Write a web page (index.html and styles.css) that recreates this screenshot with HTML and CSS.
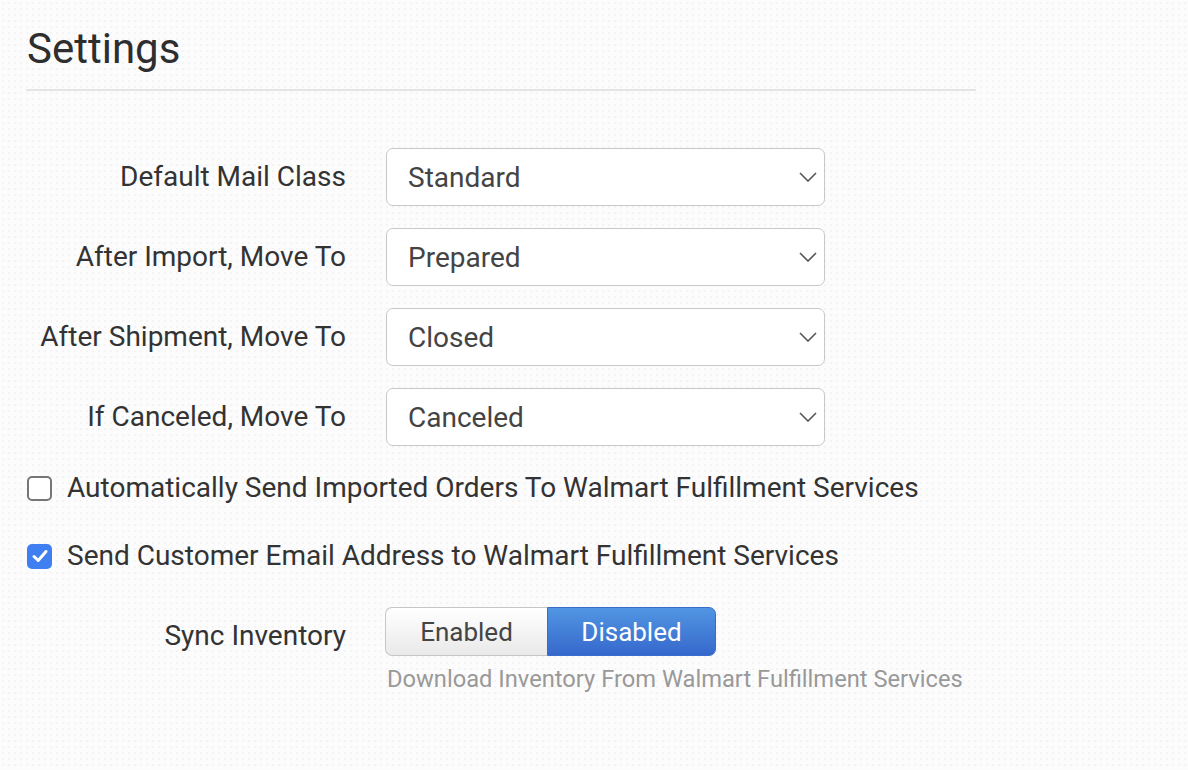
FILE: index.html
```html
<!DOCTYPE html>
<html lang="en">
<head>
<meta charset="utf-8">
<title>Settings</title>
<link rel="stylesheet" href="styles.css">
</head>
<body>
<main class="page">
  <h1 class="title">Settings</h1>
  <div class="divider"></div>
  <form class="form">
    <div class="field">
      <label class="label">Default Mail Class</label>
      <div class="select"><span>Standard</span><svg class="chev" width="18" height="10" viewBox="0 0 18 10"><polyline points="1,1 9,9 17,1" fill="none" stroke="#555" stroke-width="1.6"/></svg></div>
    </div>
    <div class="field">
      <label class="label">After Import, Move To</label>
      <div class="select"><span>Prepared</span><svg class="chev" width="18" height="10" viewBox="0 0 18 10"><polyline points="1,1 9,9 17,1" fill="none" stroke="#555" stroke-width="1.6"/></svg></div>
    </div>
    <div class="field">
      <label class="label">After Shipment, Move To</label>
      <div class="select"><span>Closed</span><svg class="chev" width="18" height="10" viewBox="0 0 18 10"><polyline points="1,1 9,9 17,1" fill="none" stroke="#555" stroke-width="1.6"/></svg></div>
    </div>
    <div class="field">
      <label class="label">If Canceled, Move To</label>
      <div class="select"><span>Canceled</span><svg class="chev" width="18" height="10" viewBox="0 0 18 10"><polyline points="1,1 9,9 17,1" fill="none" stroke="#555" stroke-width="1.6"/></svg></div>
    </div>

    <label class="check first">
      <span class="box"></span>
      <span>Automatically Send Imported Orders To Walmart Fulfillment Services</span>
    </label>
    <label class="check second">
      <span class="box checked"><svg width="24" height="24" viewBox="0 0 24 24"><polyline points="6,12.5 10.2,16.5 18,7.5" fill="none" stroke="#fff" stroke-width="3" stroke-linecap="round" stroke-linejoin="round"/></svg></span>
      <span>Send Customer Email Address to Walmart Fulfillment Services</span>
    </label>

    <div class="field sync">
      <label class="label sync-label">Sync Inventory</label>
      <div class="sync-control">
        <div class="toggle">
          <span class="opt off">Enabled</span>
          <span class="opt on">Disabled</span>
        </div>
        <div class="help">Download Inventory From Walmart Fulfillment Services</div>
      </div>
    </div>
  </form>
</main>
</body>
</html>
```

FILE: styles.css
```css
html, body {
  margin: 0;
  padding: 0;
}
body {
  width: 1188px;
  height: 770px;
  overflow: hidden;
  background-color: #fcfcfc;
  background-image: radial-gradient(circle, #f4f4f4 1px, transparent 1.6px);
  background-size: 6px 6px;
  font-family: Roboto, "Liberation Sans", Arial, sans-serif;
  color: #333;
}
.page {
  padding: 24px 0 0 26px;
  width: 950px;
}
.title {
  margin: 0;
  font-size: 42px;
  line-height: 50px;
  font-weight: 400;
  color: #2e2e2e;
  padding-left: 1px;
}
.divider {
  margin-top: 15px;
  height: 2px;
  background: #e4e4e4;
}
.form {
  margin-top: 57px;
  display: flex;
  flex-direction: column;
}
.field {
  display: grid;
  grid-template-columns: 320px 439px;
  column-gap: 40px;
  align-items: center;
  margin-bottom: 22px;
}
.label {
  text-align: right;
  font-size: 28px;
  line-height: 34px;
  color: #333;
}
.select {
  box-sizing: border-box;
  height: 58px;
  background: #fff;
  border: 1.5px solid #c8c8c8;
  border-radius: 7px;
  display: flex;
  align-items: center;
  justify-content: space-between;
  padding: 0 7px 0 21px;
  font-size: 28px;
  color: #444;
}
.chev {
  display: block;
}
.check {
  display: flex;
  align-items: center;
  gap: 15px;
  font-size: 28px;
  line-height: 34px;
  color: #333;
  padding-left: 1px;
}
.check.first {
  margin-top: 3px;
}
.check.second {
  margin-top: 34px;
}
.box {
  box-sizing: border-box;
  width: 25px;
  height: 25px;
  border: 2px solid #767676;
  border-radius: 5px;
  background: #fff;
  flex: none;
}
.box.checked {
  border: none;
  background: #3f7ff2;
  display: flex;
  align-items: center;
  justify-content: center;
}
.box.checked svg {
  display: block;
}
.field.sync {
  margin-top: 34px;
  align-items: start;
}
.sync-label {
  margin-top: 12px;
}
.sync-control {
  margin-left: -1px;
  white-space: nowrap;
}
.toggle {
  display: flex;
  height: 49px;
  width: 331px;
}
.opt {
  box-sizing: border-box;
  display: flex;
  align-items: center;
  justify-content: center;
  font-size: 26px;
  height: 49px;
}
.opt.off {
  width: 162px;
  background: linear-gradient(#ffffff, #e9e9e9);
  border: 1.5px solid #c6c6c6;
  border-right: none;
  border-radius: 7px 0 0 7px;
  color: #444;
}
.opt.on {
  width: 169px;
  background: linear-gradient(#5196e2, #3668cc);
  border: 1px solid #3a6ccb;
  border-radius: 0 7px 7px 0;
  color: #fff;
}
.help {
  margin-top: 9px;
  font-size: 23.7px;
  line-height: 28px;
  color: #999;
  padding-left: 2px;
  white-space: nowrap;
}
```
